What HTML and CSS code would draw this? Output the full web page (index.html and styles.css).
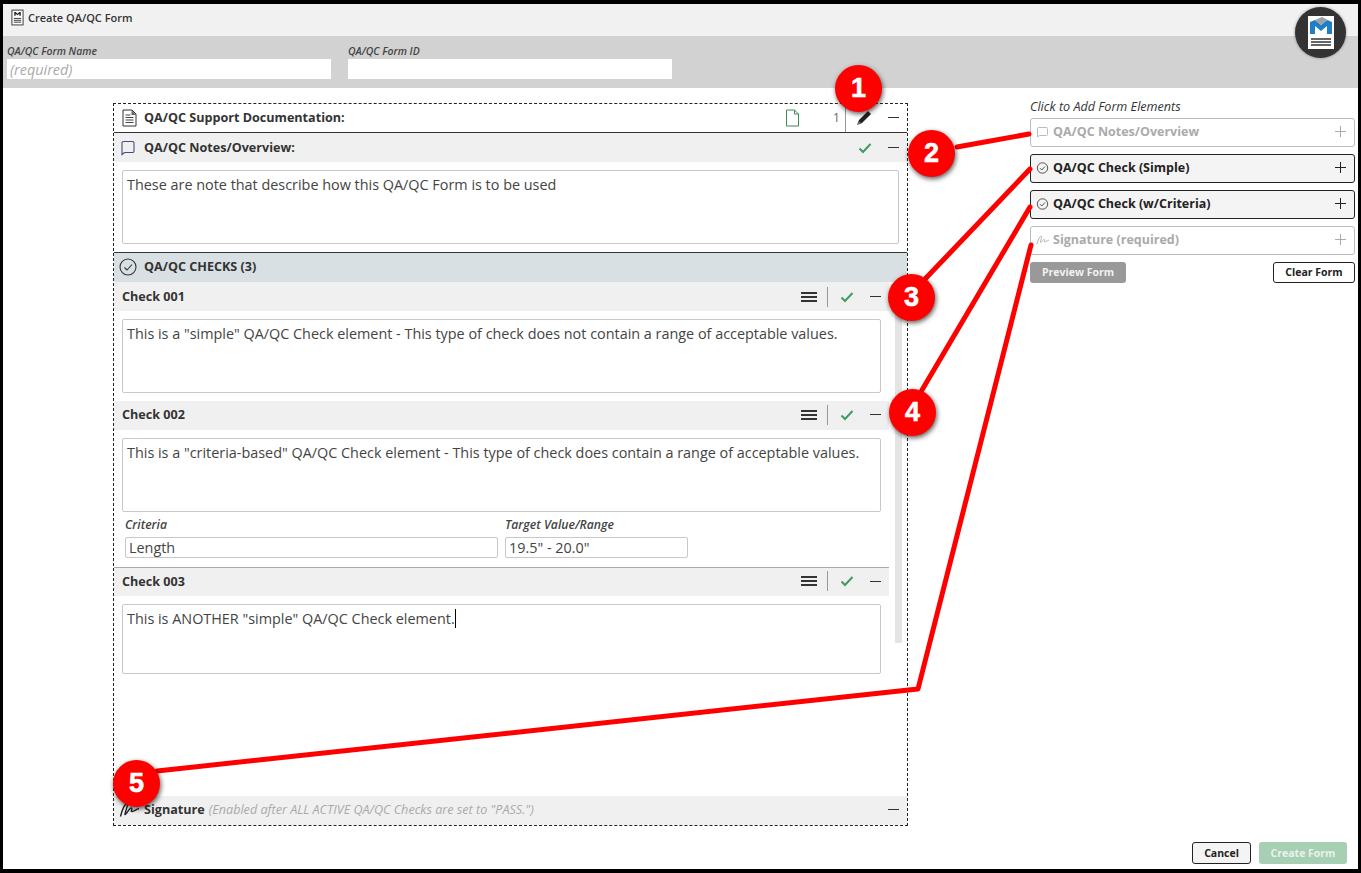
FILE: index.html
```html
<!DOCTYPE html>
<html lang="en">
<head>
<meta charset="utf-8">
<title>Create QA/QC Form</title>
<link rel="stylesheet" href="styles.css">
</head>
<body>
<div class="frame">
  <header class="titlebar">
    <svg class="title-icon" viewBox="0 0 14 18"><rect x="1" y="1" width="12" height="16" fill="#fff" stroke="#333"/><path d="M3.500 7V3h1.500l2 2 2-2h1.500v4h-1.500V5L7 6.500 5 5v2z" fill="#222"/><path d="M3 10h8M3 12h8M3 14h8" stroke="#333"/></svg>
    <span class="title-text">Create QA/QC Form</span>
  </header>
  <section class="idband">
    <div class="idfield"><label class="idlabel">QA/QC Form Name</label><div class="idinput idplaceholder">(required)</div></div>
    <div class="idfield"><label class="idlabel">QA/QC Form ID</label><div class="idinput"></div></div>
  </section>
  <main class="main">
    <section class="panel">
      <div class="row row-doc">
        <svg class="lead" viewBox="0 0 16 18"><path d="M1.500 1h9l4 4v12h-13z" fill="#fff" stroke="#333"/><path d="M10 1v5h4.500L10 1z" fill="#666"/><path d="M4 6h5M4 8.500h8M4 11h8M4 13.500h8" stroke="#444" stroke-width="1.200"/></svg>
        <span class="rowtitle">QA/QC Support Documentation:</span>
        <span class="spacer"></span>
        <svg class="file-icon" viewBox="0 0 14 18"><path d="M1 1h8l4 4v12H1z M9 1v4h4" fill="none" stroke="#3d8b5a"/></svg>
        <span class="count">1</span>
        <span class="divider div-doc"></span>
        <svg class="pencil" viewBox="0 0 16 16"><path d="M12 1l3 3-9 9-4 1 1-4z" fill="#222"/><path d="M1 15l1.500-4.500 3 3z" fill="#666"/></svg>
        <span class="minus minus-doc"></span>
      </div>
      <div class="row row-notes">
        <svg class="lead bubble" viewBox="0 0 14 16"><path d="M2.500 1.500h9a1.500 1.500 0 0 1 1.500 1.500v8a1.500 1.500 0 0 1-1.500 1.500H3.500L1 14.500V3a1.500 1.500 0 0 1 1.500-1.500z" fill="none" stroke="#44507a" stroke-width="1.100"/></svg>
        <span class="rowtitle">QA/QC Notes/Overview:</span>
        <span class="spacer"></span>
        <svg class="okcheck ok-notes" viewBox="0 0 14 12"><path d="M1.500 6.500l3.500 3.500 7.500-8" fill="none" stroke="#3f9a68" stroke-width="2"/></svg>
        <span class="minus minus-doc"></span>
      </div>
      <div class="note-wrap"><div class="box box-note">These are note that describe how this QA/QC Form is to be used</div></div>
      <div class="row row-checks">
        <svg class="circlecheck" viewBox="0 0 18 18"><circle cx="9" cy="9" r="8" fill="none" stroke="#333" stroke-width="1.100"/><path d="M5.500 9.500l2.500 2.500 5-5.500" fill="none" stroke="#333" stroke-width="1.100"/></svg>
        <span class="rowtitle">QA/QC CHECKS (3)</span>
      </div>
      <div class="checks">
        <div class="checklist">
          <div class="row row-check">
            <span class="checktitle">Check 001</span><span class="spacer"></span>
            <span class="burger"></span><span class="divider"></span>
            <svg class="okcheck" viewBox="0 0 14 12"><path d="M1.500 6.500l3.500 3.500 7.500-8" fill="none" stroke="#3f9a68" stroke-width="2"/></svg>
            <span class="minus"></span>
          </div>
          <div class="box box-check">This is a "simple" QA/QC Check element - This type of check does not contain a range of acceptable values.</div>
          <div class="row row-check row-up">
            <span class="checktitle">Check 002</span><span class="spacer"></span>
            <span class="burger"></span><span class="divider"></span>
            <svg class="okcheck" viewBox="0 0 14 12"><path d="M1.500 6.500l3.500 3.500 7.500-8" fill="none" stroke="#3f9a68" stroke-width="2"/></svg>
            <span class="minus"></span>
          </div>
          <div class="box box-check">This is a "criteria-based" QA/QC Check element - This type of check does contain a range of acceptable values.</div>
          <div class="criteria">
            <div class="crit crit-a"><label class="critlabel">Criteria</label><div class="critinput">Length</div></div>
            <div class="crit crit-b"><label class="critlabel">Target Value/Range</label><div class="critinput">19.5" - 20.0"</div></div>
          </div>
          <div class="row row-check row-last row-up">
            <span class="checktitle">Check 003</span><span class="spacer"></span>
            <span class="burger"></span><span class="divider"></span>
            <svg class="okcheck" viewBox="0 0 14 12"><path d="M1.500 6.500l3.500 3.500 7.500-8" fill="none" stroke="#3f9a68" stroke-width="2"/></svg>
            <span class="minus"></span>
          </div>
          <div class="box box-check box-short">This is ANOTHER "simple" QA/QC Check element.<span class="caret"></span></div>
        </div>
        <div class="track"></div>
      </div>
      <div class="row row-sign">
        <svg class="lead sign" viewBox="0 0 20 16"><path d="M1.500 14.500C3 8 6 1 8 1.500 10 2 5 12 6 12.500 7 13 11 5 12.500 6 14 7 11 9.500 13 9.500 15 9.500 17 7.500 20 6.500" fill="none" stroke="#222" stroke-width="1.400"/></svg>
        <span class="rowtitle">Signature</span>
        <span class="signnote">(Enabled after ALL ACTIVE QA/QC Checks are set to "PASS.")</span>
        <span class="spacer"></span>
        <span class="minus minus-doc"></span>
      </div>
    </section>
    <aside class="side">
      <p class="sidehead">Click to Add Form Elements</p>
      <div class="addbtn addbtn-off">
        <svg class="addicon" viewBox="0 0 12 12"><path d="M2 1.500h8a1 1 0 0 1 1 1v6a1 1 0 0 1-1 1H3l-2 1.500v-8.500a1 1 0 0 1 1-1z" fill="none" stroke="#bbb"/></svg>
        <span class="addlabel">QA/QC Notes/Overview</span><span class="plus"></span>
      </div>
      <div class="addbtn addbtn-on">
        <svg class="addicon" viewBox="0 0 12 12"><circle cx="6" cy="6" r="5.200" fill="none" stroke="#444" stroke-width=".9"/><path d="M3.500 6.200l1.800 1.800 3.200-3.500" fill="none" stroke="#444" stroke-width=".9"/></svg>
        <span class="addlabel">QA/QC Check (Simple)</span><span class="plus"></span>
      </div>
      <div class="addbtn addbtn-on">
        <svg class="addicon" viewBox="0 0 12 12"><circle cx="6" cy="6" r="5.200" fill="none" stroke="#444" stroke-width=".9"/><path d="M3.500 6.200l1.800 1.800 3.200-3.500" fill="none" stroke="#444" stroke-width=".9"/></svg>
        <span class="addlabel">QA/QC Check (w/Criteria)</span><span class="plus"></span>
      </div>
      <div class="addbtn addbtn-off">
        <svg class="addicon" viewBox="0 0 14 12"><path d="M1 10.500C2 7 4 1.500 5.500 2 7 2.500 4 8.500 5 8.500S8 5 9 5.500 8.500 8 9.500 8 11.500 7 14 6" fill="none" stroke="#aaa"/></svg>
        <span class="addlabel">Signature (required)</span><span class="plus"></span>
      </div>
      <div class="sideactions">
        <span class="btn btn-preview">Preview Form</span>
        <span class="btn btn-clear">Clear Form</span>
      </div>
    </aside>
  </main>
  <footer class="footer">
    <span class="btn btn-cancel">Cancel</span>
    <span class="btn btn-create">Create Form</span>
  </footer>
</div>

<div class="logo">
  <svg viewBox="0 0 26 33" class="logo-page"><rect width="26" height="33" fill="#fff"/><path d="M2 18V6l5-2 6 5 6-5 5 2v12h-5V10l-6 5-6-5v8z" fill="#1f7fc4"/><path d="M7 4l7-3 10 5-5-2-6 5z" fill="#9aa3a8"/><path d="M3 23h20M3 26h20M3 29h20" stroke="#333" stroke-width="1.500"/></svg>
</div>

<svg class="callouts" viewBox="0 0 1361 873">
  <g fill="none" stroke="#f00" stroke-width="5" stroke-linecap="round" stroke-linejoin="round">
    <path d="M957 147L1029 134"/>
    <path d="M926 278L1030 169"/>
    <path d="M922 390L1030 207"/>
    <path d="M1031 245L918 689L157 771"/>
  </g>
</svg>
<div class="badge badge-1">1</div>
<div class="badge badge-2">2</div>
<div class="badge badge-3">3</div>
<div class="badge badge-4">4</div>
<div class="badge badge-5">5</div>
</body>
</html>
```
FILE: styles.css
```css
* { box-sizing: border-box; }
html, body { margin: 0; padding: 0; }
body {
  width: 1361px;
  height: 873px;
  overflow: hidden;
  position: relative;
  background: #fff;
  font-family: "Open Sans", sans-serif;
  color: #333;
}
.frame {
  width: 1361px;
  height: 873px;
  border-style: solid;
  border-color: #000;
  border-width: 4px 3px 4px 3px;
  display: flex;
  flex-direction: column;
  background: #fff;
}
.titlebar {
  height: 32px;
  background: #f1f1f1;
  display: flex;
  align-items: center;
  padding-left: 8px;
  gap: 4px;
  padding-bottom: 6px;
}
.title-icon { width: 13px; height: 17px; }
.title-text { font-size: 11px; font-weight: 600; color: #333; }
.idband {
  height: 52px;
  background: #d2d2d2;
  display: flex;
  gap: 17px;
  padding: 8px 0 0 4px;
}
.idfield { width: 324px; display: flex; flex-direction: column; }
.idlabel {
  font-size: 10.400px;
  font-style: italic;
  font-weight: 600;
  line-height: 15px;
  color: #444;
}
.idinput {
  height: 20px;
  background: #fff;
  font-size: 14.400px;
  line-height: 22px;
  padding-left: 3px;
  font-style: italic;
}
.idplaceholder { color: #aaa; }
.main {
  flex: 1;
  display: flex;
  padding: 15px 0 16px 110px;
  min-height: 0;
}
.panel {
  width: 795px;
  border: 1px dashed #222;
  display: flex;
  flex-direction: column;
}
.row {
  display: flex;
  align-items: center;
  flex: none;
}
.spacer { flex: 1; }
.rowtitle { font-size: 12.600px; font-weight: 700; color: #333; }
.lead { flex: none; margin: 0 6px 0 7px; }
.row-doc {
  height: 29px;
  border-bottom: 1px solid #333;
  padding: 0 8px 1px 0;
}
.row-doc .lead { width: 17px; height: 18px; margin-right: 6px; }
.file-icon { width: 15px; height: 18px; }
.count { font-size: 12px; color: #666; margin: 0 0 0 33px; width: 8px; }
.divider { width: 1px; height: 20px; background: #999; margin: 0 12px 0 10px; flex: none; }
.div-doc { height: 28px; margin: 0 10px 0 4px; }
.pencil { width: 16px; height: 16px; margin-right: 16px; }
.minus { display: block; width: 11px; height: 1px; background: #333; flex: none; margin: 0 8px 0 16px; }
.minus-doc { margin-left: 0; margin-right: 0; }
.row-notes { height: 29px; background: #f0f0f0; padding-right: 8px; }
.bubble { width: 14px; height: 16px; margin-right: 9px; }
.ok-notes { margin-right: 16px; }
.okcheck { width: 14px; height: 12px; flex: none; }
.note-wrap { padding: 8px; flex: none; border-bottom: 1px solid #333; }
.box {
  border: 1px solid #c8c8c8;
  border-radius: 2px;
  background: #fff;
  font-size: 14.400px;
  line-height: 20px;
  padding: 4px;
  color: #444;
}
.box-note { height: 74px; }
.row-checks { height: 29px; background: #d9e0e3; padding-bottom: 2px; }
.circlecheck { width: 18px; height: 18px; margin: 0 7px 0 5px; flex: none; }
.checks { display: flex; gap: 6px; align-items: flex-start; flex: none; }
.checklist { width: 775px; }
.track { width: 7px; height: 361px; background: #e4e4e4; }
.row-check { height: 29px; background: #f0f0f0; padding: 0 0 0 8px; }
.row-up { padding-bottom: 2px; }
.checktitle { font-size: 12.600px; font-weight: 700; color: #333; }
.burger {
  width: 16px;
  height: 10px;
  flex: none;
  background: repeating-linear-gradient(#333 0 2px, transparent 2px 4px);
}
.box-check { height: 74px; margin: 8px; }
.box-short { height: 70px; margin-bottom: 0; }
.row-last { border-top: 1px solid #aaa; height: 29px; }
.caret { display: inline-block; width: 1px; height: 19px; background: #000; vertical-align: -4px; }
.criteria { display: flex; height: 51px; padding-left: 11px; gap: 7px; margin-top: -4px; }
.crit { display: flex; flex-direction: column; }
.crit-a { width: 373px; }
.crit-b { width: 183px; }
.critlabel { font-size: 12.200px; font-style: italic; font-weight: 600; line-height: 18px; height: 21px; color: #444; }
.critinput {
  height: 21px;
  border: 1px solid #c8c8c8;
  border-radius: 2px;
  font-size: 14.400px;
  line-height: 19px;
  padding-left: 3px;
  color: #444;
}
.row-sign {
  height: 29px;
  margin-top: auto;
  background: #f0f0f0;
  padding: 0 8px 2px 0;
}
.sign { width: 20px; height: 16px; margin: 0 5px 0 5px; }
.signnote { font-size: 12.600px; font-style: italic; color: #aaa; margin-left: 4px; }
.side { width: 325px; margin: -5px 0 0 122px; display: flex; flex-direction: column; }
.sidehead { margin: 0; font-size: 12.600px; font-style: italic; line-height: 17px; color: #333; height: 20px; }
.addbtn {
  height: 29px;
  border-radius: 3px;
  display: flex;
  align-items: center;
  padding: 0 8px 2px 5px;
  margin-bottom: 7px;
  font-size: 12.500px;
  font-weight: 700;
}
.addbtn-off { border: 1px solid #bbb; color: #aaa; --plus: #aaa; background: #fff; }
.addbtn-on { border: 1px solid #222; color: #222; --plus: #222; background: #f4f4f4; }
.addicon { width: 13px; height: 12px; margin-right: 4px; flex: none; }
.addlabel { flex: 1; }
.plus {
  width: 11px;
  height: 11px;
  flex: none;
  background:
    linear-gradient(var(--plus), var(--plus)) center / 100% 1px no-repeat,
    linear-gradient(var(--plus), var(--plus)) center / 1px 100% no-repeat;
}
.sideactions { display: flex; justify-content: space-between; }
.btn {
  display: flex;
  align-items: center;
  justify-content: center;
  height: 21px;
  border-radius: 3px;
  font-size: 10.500px;
  font-weight: 700;
  padding-bottom: 1px;
}
.btn-preview { width: 96px; background: #999; color: #f2f2f2; }
.btn-clear { width: 82px; background: #fff; border: 1px solid #222; color: #222; }
.footer {
  height: 27px;
  flex: none;
  display: flex;
  justify-content: flex-end;
  gap: 8px;
  padding-right: 11px;
}
.btn-cancel { width: 59px; height: 22px; background: #f4f4f4; border: 1px solid #222; color: #222; }
.btn-create { width: 88px; height: 22px; background: #a7cfb4; color: #e9f3ec; }
.logo {
  position: absolute;
  left: 1295px;
  top: 7px;
  width: 51px;
  height: 51px;
  border-radius: 50%;
  background: #333;
  box-shadow: 0 0 3px rgba(0, 0, 0, .4);
  display: flex;
  align-items: center;
  justify-content: center;
}
.logo-page { width: 26px; height: 33px; }
.callouts { position: absolute; left: 0; top: 0; width: 1361px; height: 873px; pointer-events: none; }
.badge {
  position: absolute;
  width: 47px;
  height: 47px;
  border-radius: 50%;
  background: #f00;
  color: #fff;
  box-shadow: 1px 2px 5px rgba(0, 0, 0, .65);
  font-family: "Liberation Sans", sans-serif;
  font-weight: 700;
  font-size: 27px;
  line-height: 47px;
  text-align: center;
  -webkit-text-stroke: .6px #fff;
}
.badge-1 { left: 835px; top: 65px; }
.badge-2 { left: 908px; top: 130px; }
.badge-3 { left: 888px; top: 274px; }
.badge-4 { left: 889px; top: 389px; }
.badge-5 { left: 113px; top: 760px; }
```
